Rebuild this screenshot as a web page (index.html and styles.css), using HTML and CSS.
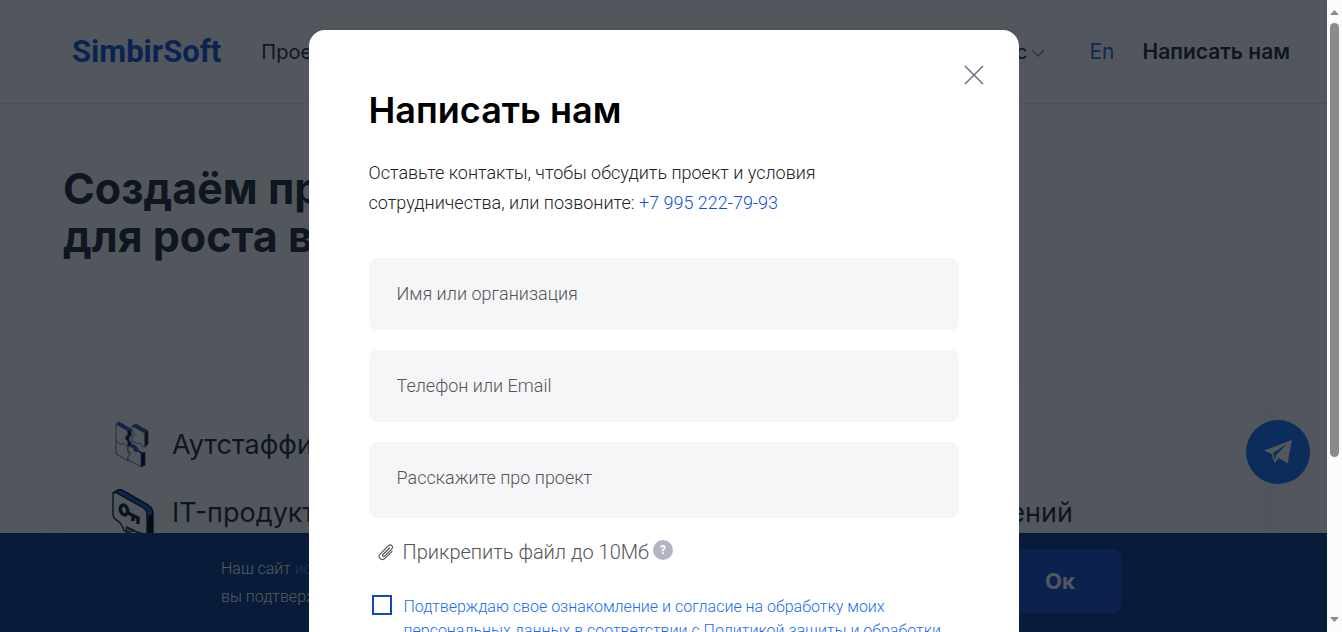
FILE: index.html
```html
<!DOCTYPE html>
<html lang="ru">
<head>
<meta charset="utf-8">
<title>SimbirSoft</title>
<link rel="stylesheet" href="styles.css">
</head>
<body>
<div class="viewport">
  <div class="site">
    <header class="header">
      <a class="logo" href="#">SimbirSoft</a>
      <nav class="nav">
        <a href="#">Проекты</a>
        <a class="nav-more" href="#">О нас
          <svg width="14" height="8" viewBox="0 0 14 8"><path d="M1 1l6 6 6-6" fill="none" stroke="#8d93a0" stroke-width="1.6"/></svg>
        </a>
      </nav>
      <a class="lang" href="#">En</a>
      <a class="contact" href="#">Написать нам</a>
    </header>
    <main class="main">
      <h1 class="title">Создаём продукты<br>для роста вашего дела</h1>
      <section class="services">
        <a class="service" href="#">
          <svg class="service-icon" width="44" height="48" viewBox="0 0 44 48">
            <g stroke="#42485c" stroke-width=".8" stroke-linejoin="round">
              <path d="M5 4l3-2 12 7v5l-3-2z" fill="#1459d8"/>
              <path d="M5 4l12 7v5c-3-1-3 4 0 5v5c-3 0-4-5-6-2-1 2-3-2-6-3z" fill="#fff"/>
              <path d="M17 11l3-2v7l-2 1v4l2 1v6l-3-2v-5c-3-1-3-6 0-5z" fill="#080432"/>
              <path d="M21 6l4-2 12 7-3 2z" fill="#1459d8"/>
              <path d="M21 6l13 7v14c-3 0-3-3-5-4s-2 2-4 0l-4-2v-4c3 0 3-5 0-6z" fill="#fff"/>
              <path d="M34 13l3-2v13l-3 3z" fill="#080432"/>
              <path d="M5 21c3 1 5 5 6 3 2-3 3 2 6 2v6c4 1 2 6 0 5v4L5 34z" fill="#fff"/>
              <path d="M17 26l3-2 5 2 3 5 5 2-3 2z" fill="#1459d8"/>
              <path d="M17 26l6 2c-1 4 3 5 4 3l4 4v12l-14-7v-4c3 0 3-5 0-5z" fill="#fff"/>
              <path d="M30 34l4-2v13l-4 2z" fill="#080432"/>
            </g>
          </svg>
          <span>Аутстаффинг</span>
        </a>
        <div class="service-row">
          <a class="service" href="#">
            <svg class="service-icon" width="44" height="48" viewBox="0 0 44 48">
              <path d="M2 5l5-3q2-1 4 0l26 15q5 3 5 9v20h-7V24z" fill="#1459d8" stroke="#0b1733" stroke-width="1.5"/>
              <path d="M36 29l6-4v22h-6z" fill="#02060e"/>
              <path d="M2 8c0-3 2-4 4-3l25 14c4 2 5 4 5 8v20l-10-3-10-5-1 5c-4-2-3-8-7-10-4-3-6-4-6-8z" fill="#fff" stroke="#202633" stroke-width="1.5"/>
              <path d="M15 39l1 6 7-2z" fill="#7b8088" stroke="#202633"/>
              <ellipse cx="13" cy="22" rx="3.500" ry="5" fill="none" stroke="#161b24" stroke-width="3.500" transform="rotate(-18 13 22)"/>
              <path d="M17 25l10 5v6M22 28v5" fill="none" stroke="#161b24" stroke-width="3.500"/>
            </svg>
            <span>IT-продукты</span>
          </a>
          <a class="service" href="#">Интеграция решений</a>
        </div>
      </section>
    </main>
    <button class="telegram" type="button" aria-label="Telegram">
      <svg width="28" height="24" viewBox="0 0 28 24"><path d="M28 0L0 10.500l7.500 3.500L10.500 23l4.500-5 8.500 5.500zM23 4L12 15l-1 5-2-7z" fill="#fff" fill-rule="evenodd"/></svg>
    </button>
    <footer class="cookies">
      <p class="cookies-text">Наш сайт <a href="#">использует cookie</a>,<br>вы подтверждаете согласие</p>
      <button class="ok" type="button">Ок</button>
    </footer>
    <div class="overlay">
      <section class="modal" role="dialog" aria-labelledby="dialog-title">
        <button class="close" type="button" aria-label="Закрыть">
          <svg width="20" height="20" viewBox="0 0 20 20"><path d="M1 1l18 18M19 1L1 19" stroke="#6b7080" stroke-width="1.5"/></svg>
        </button>
        <h2 class="modal-title" id="dialog-title">Написать нам</h2>
        <p class="intro">Оставьте контакты, чтобы обсудить проект и условия<br>сотрудничества, или позвоните: <a href="tel:+79952227993">+7 995 222-79-93</a></p>
        <form class="form">
          <input class="field" type="text" aria-label="Имя или организация" placeholder="Имя или организация">
          <input class="field" type="text" aria-label="Телефон или Email" placeholder="Телефон или Email">
          <textarea class="field area" aria-label="Расскажите про проект" placeholder="Расскажите про проект"></textarea>
          <div class="attach">
            <button class="attach-button" type="button">
              <svg width="18" height="18" viewBox="0 0 18 18"><path d="M12.500 5L6 11.500c-1.200 1.200.4 2.800 1.600 1.600l7-7c2.400-2.400-.9-5.700-3.300-3.300l-8 8c-3.300 3.300 1.300 7.900 4.600 4.600L15 8.300" fill="none" stroke="#555" stroke-width="1.200" stroke-linecap="round"/></svg>
              Прикрепить файл до 10Мб
            </button>
            <span class="hint">?</span>
          </div>
          <div class="consent">
            <input class="check" id="consent" type="checkbox">
            <label for="consent">Подтверждаю свое ознакомление и согласие на обработку моих персональных данных в соответствии с Политикой защиты и обработки</label>
          </div>
        </form>
      </section>
    </div>
  </div>
  <div class="scrollbar">
    <svg width="9" height="5" viewBox="0 0 9 5"><path d="M0 5l4.500-5L9 5z" fill="#8b8b8b"/></svg>
    <div class="track"><div class="thumb"></div></div>
    <svg width="9" height="5" viewBox="0 0 9 5"><path d="M0 0l4.500 5L9 0z" fill="#8b8b8b"/></svg>
  </div>
</div>
</body>
</html>
```
FILE: styles.css
```css
* { box-sizing: border-box; }
body { margin: 0; font-family: Roboto, sans-serif; }
a { color: inherit; text-decoration: none; }
button { border: 0; padding: 0; background: none; font: inherit; cursor: pointer; }
svg { display: block; flex: none; }

.viewport { display: grid; grid-template-columns: 1fr 15px; height: 100vh; overflow: hidden; }
.site { position: relative; overflow: hidden; background: #fff; color: #202633; }

.header {
  display: flex; align-items: center; height: 104px; padding: 0 37px 0 72px;
  border-bottom: 1px solid #e4e6ec; font-family: Inter, sans-serif; font-size: 20px;
}
.logo { color: #1252d8; font-family: Roboto, sans-serif; font-size: 31px; font-weight: 700; }
.nav { display: flex; flex: 1; justify-content: space-between; padding: 0 44px 0 40px; }
.nav-more { display: flex; align-items: center; gap: 4px; }
.nav-more svg { margin-top: 2px; }
.lang { color: #2a63e0; font-size: 21px; }
.contact { margin-left: 28px; font-size: 21px; font-weight: 600; }

.main { padding: 60px 63px 0; }
.title { margin: 0; height: 214px; font-family: Inter, sans-serif; font-size: 43px; line-height: 48px; font-weight: 700; }
.services {
  height: 400px; padding: 32px 191px 0 48px; border-radius: 24px; background: #fff;
  box-shadow: 0 8px 32px 8px rgba(30, 45, 80, .06);
  font-family: Inter, sans-serif; font-size: 27px;
}
.service { display: flex; align-items: center; gap: 17px; height: 68px; }
.service-row { display: flex; justify-content: space-between; }

.telegram {
  position: absolute; right: 17px; bottom: 148px; display: grid; place-items: center;
  width: 64px; height: 64px; border-radius: 50%; background: #1670fa;
}
.cookies {
  position: absolute; left: 0; right: 0; bottom: 0; display: flex; align-items: center; justify-content: space-between;
  height: 99px; padding: 0 206px 0 221px; background: #083783; color: #fff;
}
.cookies-text { margin: 0; font-size: 16px; line-height: 28px; font-weight: 300; }
.cookies-text a { color: #5088ff; }
.ok {
  width: 122px; height: 64px; margin-bottom: 4px; border-radius: 8px; background: #164bcd; color: #fff;
  font-family: Inter, sans-serif; font-size: 22px; font-weight: 700;
}

.overlay {
  position: absolute; inset: 0; display: flex; align-items: flex-start; justify-content: center;
  padding-top: 30px; background: rgba(9, 15, 24, .7);
}
.modal { position: relative; width: 710px; padding: 60px 60px 40px; border-radius: 16px; background: #fff; color: #222; }
.close { position: absolute; top: 35px; right: 35px; }
.modal-title { margin: 0 0 28px; color: #000; font-family: Inter, sans-serif; font-size: 36px; line-height: 40px; font-weight: 600; }
.intro { margin: 0 0 40px; font-size: 18px; line-height: 30px; font-weight: 300; }
.intro a { color: #1252d8; }
.form { display: flex; flex-direction: column; }
.field {
  width: 100%; height: 72px; margin: 0 0 20px; padding: 0 28px 2px; border: 0; border-radius: 8px;
  background: #f6f6f9; color: #222; font: 300 18px/24px Roboto, sans-serif; resize: none;
}
.field::placeholder { color: #555; opacity: 1; }
.area { height: 76px; padding-top: 24px; }
.attach { display: flex; align-items: center; gap: 4px; height: 28px; padding-left: 8px; }
.attach-button { display: flex; align-items: center; gap: 8px; color: #555; font-size: 20px; font-weight: 300; }
.hint {
  display: grid; place-items: center; width: 20px; height: 20px; margin-bottom: 4px; border-radius: 50%;
  background: #b0b5c3; color: #fff; font-size: 12px; font-weight: 700;
}
.consent { display: flex; align-items: flex-start; gap: 12px; margin-top: 28px; padding-left: 3px; color: #1a6cf0; font-size: 16px; line-height: 24px; }
.consent label { padding-top: 1px; font-weight: 300; }
.check { appearance: none; flex: none; width: 20px; height: 20px; margin: 1px 0 0; border: 2px solid #1249b8; background: #fff; }

.scrollbar { display: flex; flex-direction: column; align-items: center; padding: 10px 0 10px; background: #fcfcfc; }
.track { flex: 1; width: 9px; padding: 8px 0; }
.thumb { height: 74%; border-radius: 5px; background: #8b8b8b; }
```
